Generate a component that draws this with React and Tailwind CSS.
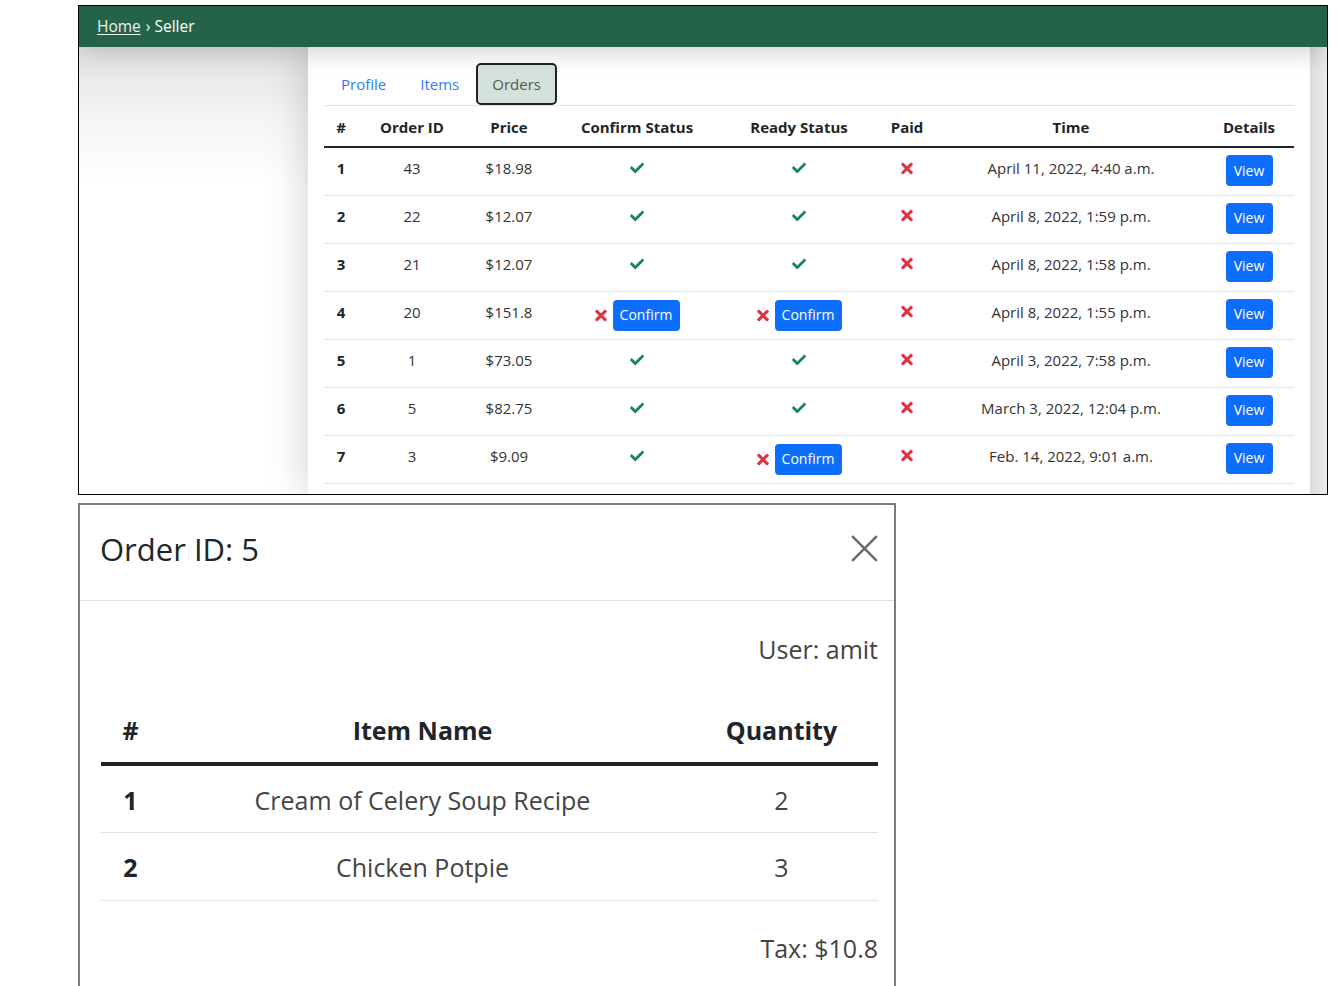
import React from "react";

const Check = () => (
  <svg width="14" height="14" viewBox="0 0 512 512" className="inline-block align-middle">
    <path fill="#198754" d="M173.898 439.404l-166.4-166.4c-9.997-9.997-9.997-26.206 0-36.204l36.203-36.204c9.997-9.998 26.207-9.998 36.204 0L192 312.69 432.095 72.596c9.997-9.997 26.207-9.997 36.204 0l36.203 36.204c9.997 9.997 9.997 26.206 0 36.204l-294.4 294.401c-9.998 9.997-26.207 9.997-36.204-.001z" />
  </svg>
);

const Times = () => (
  <svg width="12" height="17" viewBox="0 0 352 512" className="inline-block align-middle">
    <path fill="#dc3545" d="M242.72 256l100.07-100.07c12.28-12.28 12.28-32.19 0-44.48l-22.240-22.24c-12.28-12.28-32.19-12.28-44.48 0L176 189.28 75.93 89.21c-12.28-12.28-32.19-12.28-44.48 0L9.21 111.45c-12.28 12.28-12.28 32.19 0 44.48L109.28 256 9.21 356.07c-12.28 12.28-12.28 32.19 0 44.48l22.24 22.24c12.28 12.28 32.2 12.28 44.48 0L176 322.72l100.07 100.07c12.28 12.28 32.2 12.28 44.48 0l22.24-22.24c12.28-12.28 12.28-32.19 0-44.48L242.72 256z" />
  </svg>
);

const Btn = ({ children, w }) => (
  <span className={`inline-flex h-[31px] items-center justify-center rounded-[4px] bg-[#0d6efd] text-[14px] text-white ${w}`}>
    {children}
  </span>
);

const Status = ({ ok }) =>
  ok ? (
    <div className="flex h-[24px] items-center justify-center">
      <Check />
    </div>
  ) : (
    <div className="flex items-center justify-center gap-[6px]">
      <Times />
      <Btn w="w-[67px]">Confirm</Btn>
    </div>
  );

const rows = [
  [1, 43, "$18.98", true, true, "April 11, 2022, 4:40 a.m."],
  [2, 22, "$12.07", true, true, "April 8, 2022, 1:59 p.m."],
  [3, 21, "$12.07", true, true, "April 8, 2022, 1:58 p.m."],
  [4, 20, "$151.8", false, false, "April 8, 2022, 1:55 p.m."],
  [5, 1, "$73.05", true, true, "April 3, 2022, 7:58 p.m."],
  [6, 5, "$82.75", true, true, "March 3, 2022, 12:04 p.m."],
  [7, 3, "$9.09", true, false, "Feb. 14, 2022, 9:01 a.m."],
];

export default function App() {
  return (
    <div
      className="flex h-[986px] w-[1344px] flex-col overflow-hidden bg-white pl-[78px] pt-[5px]"
      style={{ fontFamily: '"Open Sans", "Noto Sans", sans-serif' }}
    >
      {/* top screenshot */}
      <div className="flex h-[490px] w-[1250px] shrink-0 flex-col overflow-hidden border border-black">
        <div className="relative z-10 flex h-[41px] shrink-0 items-center bg-[#246348] pl-[18px] text-[15.5px] text-white shadow-[0_6px_26px_rgba(0,0,0,0.17)]">
          <span className="text-[#eef2f0] underline underline-offset-2">Home</span>
          <span className="ml-[5px]">› Seller</span>
        </div>
        <div className="flex flex-1">
          <div className="w-[229px] shrink-0 bg-[linear-gradient(to_bottom,#e2e2e2,#f5f5f5_70px,#ffffff_140px)]" />
          <div className="w-[1002px] shrink-0 bg-white px-[16px] pt-[16px] shadow-[0_0_40px_rgba(0,0,0,0.2)]">
            <div className="flex h-[43px] items-stretch border-b border-[#dee2e6] text-[15px]">
              <span className="flex items-center px-[17px] text-[#2f7cf6]">Profile</span>
              <span className="flex items-center px-[17px] text-[#2f7cf6]">Items</span>
              <span className="flex items-center rounded-[5px] border-2 border-[#222] bg-[#d3e3dc] px-[14px] text-[#555]">
                Orders
              </span>
            </div>
            <table className="w-[970px] table-fixed border-collapse text-[15px]">
              <colgroup>
                <col className="w-[34px]" />
                <col className="w-[108px]" />
                <col className="w-[86px]" />
                <col className="w-[170px]" />
                <col className="w-[154px]" />
                <col className="w-[62px]" />
                <col className="w-[266px]" />
                <col className="w-[90px]" />
              </colgroup>
              <thead>
                <tr className="h-[41px] border-b-2 border-[#212529] text-[#212529]">
                  {["#", "Order ID", "Price", "Confirm Status", "Ready Status", "Paid", "Time", "Details"].map((h) => (
                    <th key={h} className="px-0 pt-[1px] text-center align-middle font-bold leading-[24px]">
                      {h}
                    </th>
                  ))}
                </tr>
              </thead>
              <tbody className="text-[#333]">
                {rows.map((r) => (
                  <tr key={r[0]} className="h-[48px] border-b border-[#dee2e6]">
                    <td className="py-[8px] text-center align-top font-bold leading-[24px] text-[#212529]">{r[0]}</td>
                    <td className="py-[8px] text-center align-top leading-[24px]">{r[1]}</td>
                    <td className="py-[8px] text-center align-top leading-[24px]">{r[2]}</td>
                    <td className="py-[8px] text-center align-top leading-[24px]"><Status ok={r[3]} /></td>
                    <td className="py-[8px] text-center align-top leading-[24px]"><Status ok={r[4]} /></td>
                    <td className="py-[8px] text-center align-top leading-[24px]">
                      <div className="flex h-[24px] items-center justify-center"><Times /></div>
                    </td>
                    <td className="py-[8px] text-center align-top leading-[24px]">{r[5]}</td>
                    <td className="py-[7px] text-center align-top leading-[24px]">
                      <Btn w="w-[47px]">View</Btn>
                    </td>
                  </tr>
                ))}
              </tbody>
            </table>
          </div>
          <div className="flex-1 bg-[linear-gradient(to_right,#dcdcdc,#ececec)]" />
        </div>
      </div>

      {/* modal */}
      <div className="mt-[8px] w-[818px] flex-1 border-2 border-b-0 border-[#7a7a7a] bg-white">
        <div className="flex h-[96px] items-center justify-between border-b border-[#dee2e6] pb-[6px] pl-[20px] pr-[16px]">
          <span className="text-[31px] font-medium leading-[47px] text-[#212529]">Order ID: 5</span>
          <svg width="27" height="27" viewBox="0 0 27 27" className="mb-[2px]">
            <path d="M1.2 1.2 L25.8 25.8 M25.8 1.2 L1.2 25.8" stroke="#6a6a6a" strokeWidth="2.5" fill="none" />
          </svg>
        </div>
        <div className="pl-[21px] pr-[16px] pt-[30px]">
          <div className="text-right text-[25px] leading-[37px] text-[#444]">User: amit</div>
          <table className="mt-[30px] w-[777px] table-fixed border-collapse text-[25px]">
            <colgroup>
              <col className="w-[59px]" />
              <col className="w-[525px]" />
              <col className="w-[193px]" />
            </colgroup>
            <thead>
              <tr className="h-[66px] border-b-[4px] border-[#212529] text-[#212529]">
                <th className="text-center font-bold leading-[37px]">#</th>
                <th className="text-center font-bold leading-[37px]">Item Name</th>
                <th className="text-center font-bold leading-[37px]">Quantity</th>
              </tr>
            </thead>
            <tbody className="text-[#444]">
              <tr className="h-[68px] border-b border-[#dee2e6]">
                <td className="pt-[3px] text-center font-bold text-[#212529]">1</td>
                <td className="pt-[3px] text-center">Cream of Celery Soup Recipe</td>
                <td className="pt-[3px] text-center">2</td>
              </tr>
              <tr className="h-[68px] border-b border-[#dee2e6]">
                <td className="pt-[3px] text-center font-bold text-[#212529]">2</td>
                <td className="pt-[3px] text-center">Chicken Potpie</td>
                <td className="pt-[3px] text-center">3</td>
              </tr>
            </tbody>
          </table>
          <div className="mt-[29px] text-right text-[25px] leading-[37px] text-[#444]">Tax: $10.8</div>
        </div>
      </div>
    </div>
  );
}
